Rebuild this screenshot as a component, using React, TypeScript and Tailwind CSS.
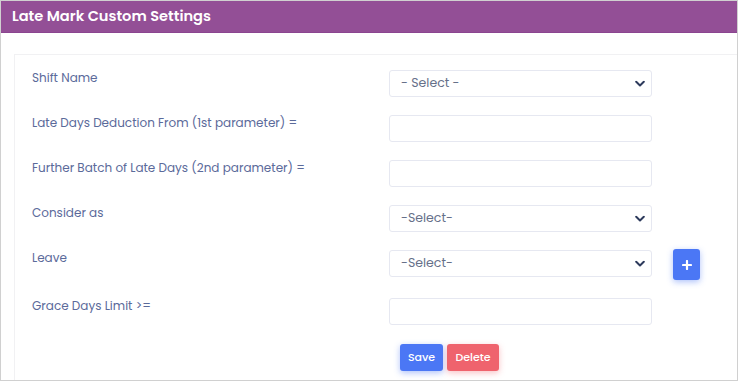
import React from 'react';

const font = { fontFamily: 'Poppins, Inter, "Liberation Sans", sans-serif' };

const Chevron = () => (
  <svg className="pointer-events-none absolute right-[7px] top-1/2 -translate-y-1/2" width="10" height="7" viewBox="0 0 10 7">
    <path d="M1.2 1.3 L5 5 L8.8 1.3" fill="none" stroke="#2d3a5c" strokeWidth="2" strokeLinecap="round" strokeLinejoin="round" />
  </svg>
);

const SelectBox: React.FC<{ text: string }> = ({ text }) => (
  <div className="relative w-[263px] h-[27px]">
    <select
      defaultValue=""
      className="appearance-none w-full h-full border border-[#e6e8f1] rounded-[3px] bg-white pl-[11px] text-[12.5px] text-[#667089] outline-none"
    >
      <option value="">{text}</option>
    </select>
    <Chevron />
  </div>
);

const TextBox = () => (
  <input className="w-[263px] h-[27px] border border-[#e6e8f1] rounded-[3px] bg-white px-[11px] text-[12.5px] outline-none" />
);

const Label: React.FC<{ children: React.ReactNode }> = ({ children }) => (
  <div className="w-[357px] shrink-0 text-[12px] leading-[18px] -mt-px text-[#5b6a9a]">{children}</div>
);

export default function App() {
  return (
    <div style={font} className="w-[738px] h-[381px] bg-white border border-[#d0d0d0] overflow-hidden">
      <div className="h-[32px] bg-[#934f96] border-b border-[#8b4590] flex items-center px-[11px]">
        <h3 className="text-white text-[14.6px] font-semibold">Late Mark Custom Settings</h3>
      </div>
      <div className="pt-[21px] pl-[13px]">
        <div className="border-l border-t border-[#f1f1f3] pl-[17px] pt-[15px] h-[330px]">
          <div className="flex mb-[18px]">
            <Label>Shift Name</Label>
            <SelectBox text="- Select -" />
          </div>
          <div className="flex mb-[18px]">
            <Label>Late Days Deduction From (1st parameter) =</Label>
            <TextBox />
          </div>
          <div className="flex mb-[18px]">
            <Label>Further Batch of Late Days (2nd parameter) =</Label>
            <TextBox />
          </div>
          <div className="flex mb-[18px]">
            <Label>Consider as</Label>
            <SelectBox text="-Select-" />
          </div>
          <div className="flex mb-[18px]">
            <Label>Leave</Label>
            <SelectBox text="-Select-" />
            <button className="ml-[21px] -mt-px w-[27px] h-[31px] rounded-[3px] bg-[#4b77f5] shadow-[0_2px_6px_rgba(75,119,245,0.45)] flex items-center justify-center">
              <svg width="10" height="10" viewBox="0 0 10 10">
                <path d="M5 1 V9 M1 5 H9" stroke="#fff" strokeWidth="2.2" strokeLinecap="round" />
              </svg>
            </button>
          </div>
          <div className="flex">
            <Label>Grace Days Limit &gt;=</Label>
            <TextBox />
          </div>
          <div className="flex gap-[4px] pl-[368px] mt-[19px]">
            <button className="w-[43px] h-[27px] rounded-[3px] bg-[#4b77f5] text-white text-[11px] font-medium shadow-[0_2px_6px_rgba(75,119,245,0.45)]">
              Save
            </button>
            <button className="w-[52px] h-[27px] rounded-[3px] bg-[#ef636d] text-white text-[11px] font-medium shadow-[0_2px_6px_rgba(239,99,109,0.4)]">
              Delete
            </button>
          </div>
        </div>
      </div>
    </div>
  );
}
